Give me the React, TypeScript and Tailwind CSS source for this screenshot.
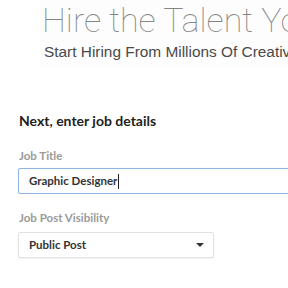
export default function App() {
  return (
    <div className="h-[288px] w-[288px] overflow-hidden bg-white">
      <div className="ml-[40px] flex h-[68px] flex-col whitespace-nowrap bg-[#fdfdfd] pl-[2px]">
        <h1 className="mt-0 font-['Roboto',sans-serif] text-[34px] font-thin leading-[40px] text-[#858585]">
          Hire the Talent You Need
        </h1>
        <p className="mt-[2px] pl-[2px] font-['Liberation_Sans',Arial,sans-serif] text-[15.4px] leading-[20px] text-[#4a4a4a]">
          Start Hiring From Millions Of Creatives
        </p>
      </div>

      <div className="pl-[18px] pt-[44px] font-['Lato',sans-serif]">
        <h2 className="pl-[1px] text-[14px] font-bold leading-[18px] text-[#222]">
          Next, enter job details
        </h2>

        <label className="mt-[18px] block pl-[1px] text-[11.5px] font-bold leading-[16px] text-[#9a9a9a]">
          Job Title
        </label>
        <div className="mt-[4px] flex h-[26px] w-[300px] items-center rounded-[2px] border border-[#8fb4e6] bg-white pl-[10px] shadow-[0_0_1px_#c9dcf5]">
          <span className="text-[11.5px] font-bold text-[#333]">Graphic Designer</span>
          <span className="ml-[1px] h-[15px] w-px bg-[#222]" />
        </div>

        <label className="mt-[16px] block pl-[1px] text-[11.5px] font-bold leading-[16px] text-[#9a9a9a]">
          Job Post Visibility
        </label>
        <div className="mt-[6px] flex h-[26px] w-[196px] items-center justify-between rounded-[2px] border border-[#e2e2e2] bg-white pl-[10px] pr-[9px] shadow-[0_1px_2px_rgba(0,0,0,0.06)]">
          <span className="text-[11.5px] font-bold text-[#333]">Public Post</span>
          <svg width="8" height="4" viewBox="0 0 8 4">
            <path d="M0 0h8L4 4z" fill="#333" />
          </svg>
        </div>
      </div>
    </div>
  );
}
